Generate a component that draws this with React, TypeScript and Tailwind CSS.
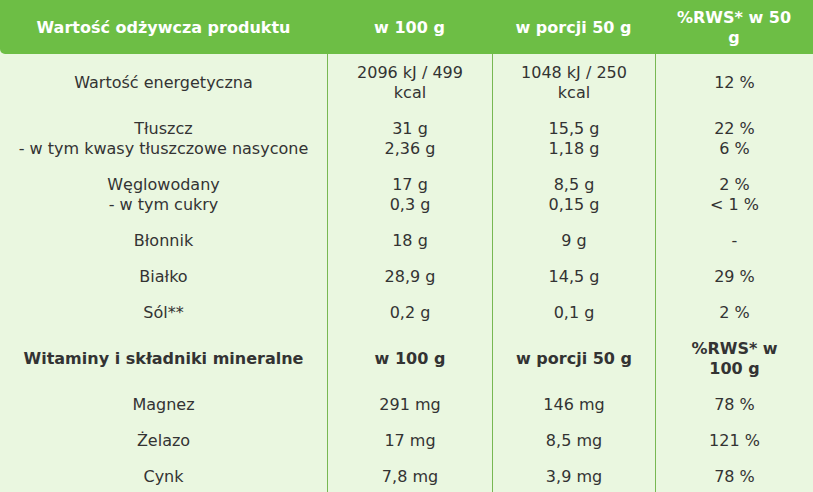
import React from 'react';

type Row = { label: string[]; a: string[]; b: string[]; c: string[]; bold?: boolean };

const rows: Row[] = [
  { label: ['Wartość energetyczna'], a: ['2096 kJ / 499', 'kcal'], b: ['1048 kJ / 250', 'kcal'], c: ['12 %'] },
  { label: ['Tłuszcz', '- w tym kwasy tłuszczowe nasycone'], a: ['31 g', '2,36 g'], b: ['15,5 g', '1,18 g'], c: ['22 %', '6 %'] },
  { label: ['Węglowodany', '- w tym cukry'], a: ['17 g', '0,3 g'], b: ['8,5 g', '0,15 g'], c: ['2 %', '< 1 %'] },
  { label: ['Błonnik'], a: ['18 g'], b: ['9 g'], c: ['-'] },
  { label: ['Białko'], a: ['28,9 g'], b: ['14,5 g'], c: ['29 %'] },
  { label: ['Sól**'], a: ['0,2 g'], b: ['0,1 g'], c: ['2 %'] },
  { label: ['Witaminy i składniki mineralne'], a: ['w 100 g'], b: ['w porcji 50 g'], c: ['%RWS* w', '100 g'], bold: true },
  { label: ['Magnez'], a: ['291 mg'], b: ['146 mg'], c: ['78 %'] },
  { label: ['Żelazo'], a: ['17 mg'], b: ['8,5 mg'], c: ['121 %'] },
  { label: ['Cynk'], a: ['7,8 mg'], b: ['3,9 mg'], c: ['78 %'] },
];

function Lines({ items }: { items: string[] }) {
  return (
    <>
      {items.map((t, i) => (
        <div key={i} className="whitespace-nowrap">{t}</div>
      ))}
    </>
  );
}

export default function App() {
  return (
    <div
      className="w-[813px] h-[492px] overflow-hidden bg-[#eaf7e0] text-[#333333] text-[16px] leading-[20px]"
      style={{ fontFamily: '"DejaVu Sans", Verdana, sans-serif' }}
    >
      {/* Header */}
      <div className="grid grid-cols-[327px_165px_163px_158px] h-[54px] pt-[2px] bg-[#6dbe45] text-white font-bold rounded-bl-[5px]">
        <div className="flex items-center justify-center text-center px-2 whitespace-nowrap">Wartość odżywcza produktu</div>
        <div className="flex items-center justify-center text-center px-2">w 100 g</div>
        <div className="flex items-center justify-center text-center px-2">w porcji 50 g</div>
        <div className="flex flex-col items-center justify-center text-center">
          <div>%RWS* w 50</div>
          <div>g</div>
        </div>
      </div>

      {/* Body */}
      <div className="grid grid-cols-[327px_165px_163px_158px]">
        {rows.map((r, i) => (
          <React.Fragment key={i}>
            <div className={`pt-[9px] pb-[7px] text-center flex flex-col items-center justify-center ${r.bold ? 'font-bold' : ''}`}>
              <Lines items={r.label} />
            </div>
            <div className={`pt-[9px] pb-[7px] text-center flex flex-col items-center justify-center border-l border-[#78b853] ${r.bold ? 'font-bold' : ''}`}>
              <Lines items={r.a} />
            </div>
            <div className={`pt-[9px] pb-[7px] text-center flex flex-col items-center justify-center border-l border-[#78b853] ${r.bold ? 'font-bold' : ''}`}>
              <Lines items={r.b} />
            </div>
            <div className={`pt-[9px] pb-[7px] text-center flex flex-col items-center justify-center border-l border-[#78b853] ${r.bold ? 'font-bold' : ''}`}>
              <Lines items={r.c} />
            </div>
          </React.Fragment>
        ))}
      </div>
    </div>
  );
}
